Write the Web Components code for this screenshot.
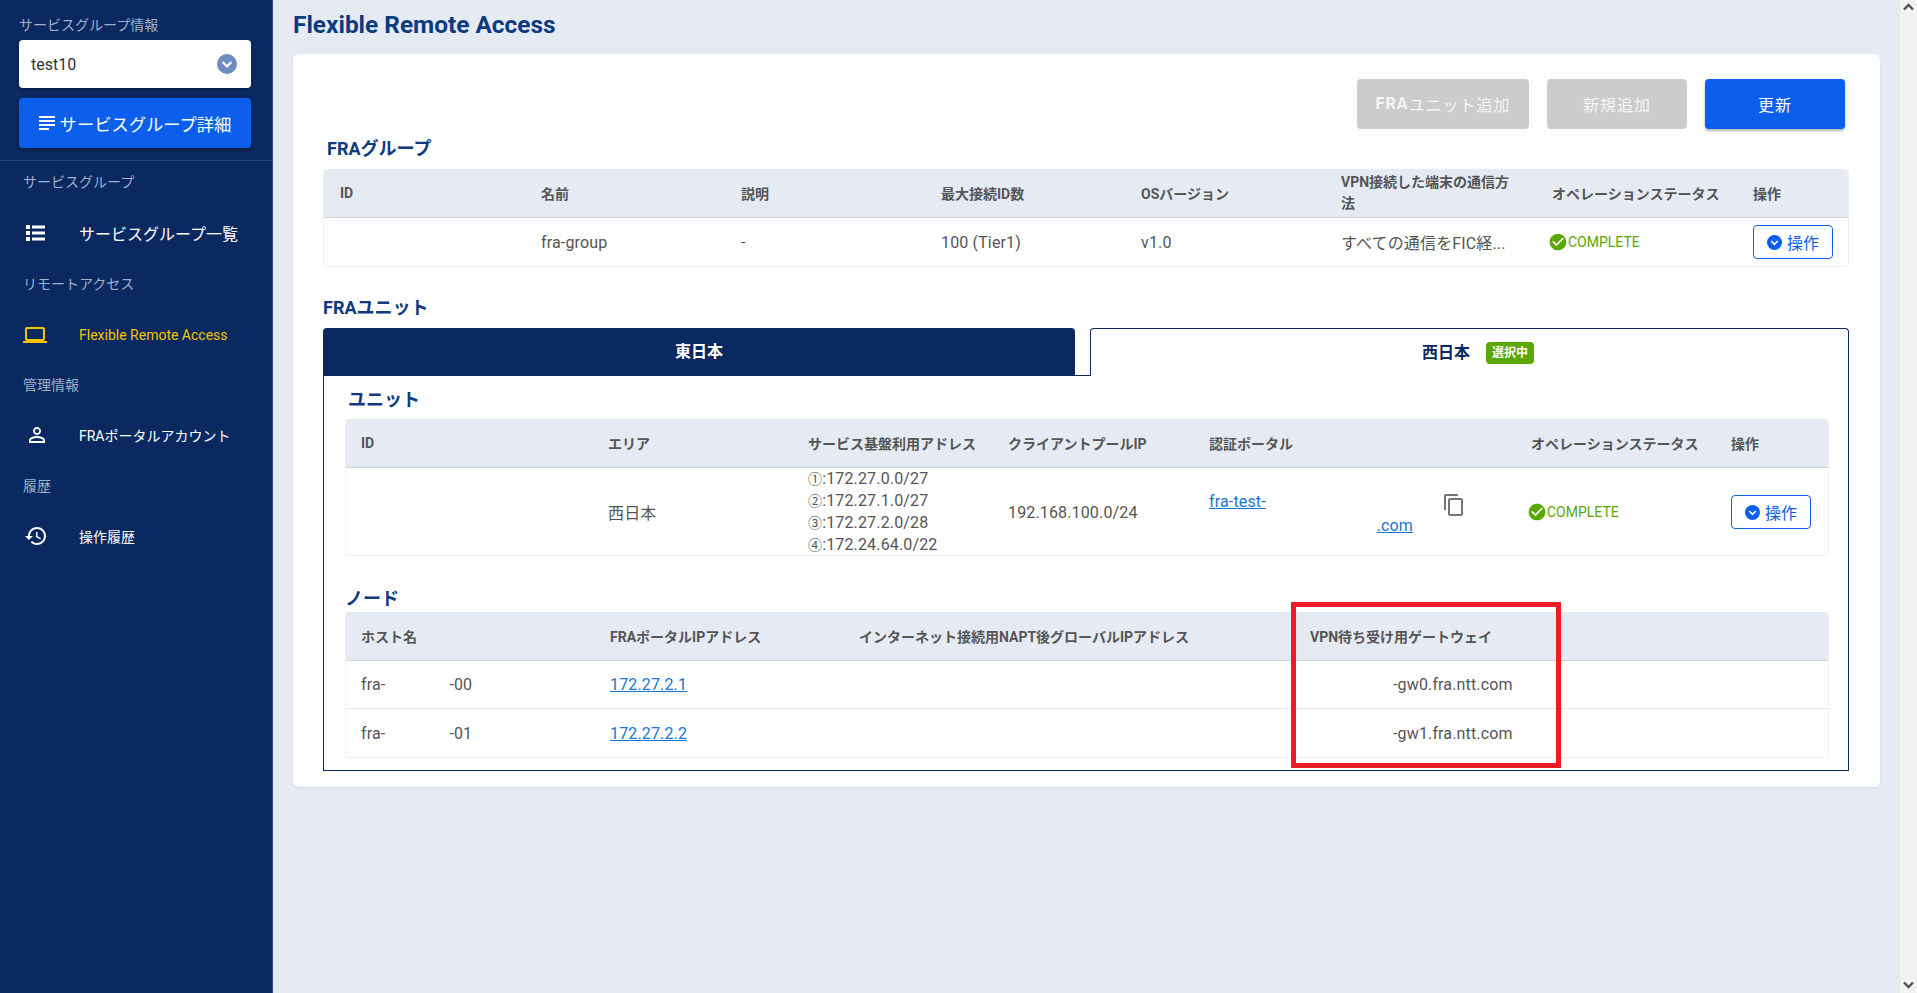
<!DOCTYPE html>
<html lang="ja">
<head>
<meta charset="utf-8">
<title>Flexible Remote Access</title>
<style>
  html, body { margin: 0; height: 993px; overflow: hidden; }
  body { font-family: Roboto, "Noto Sans CJK JP", sans-serif; font-size: 16px; color: #555; background: #e6eaf3; }
  a { color: #1976d2; }
  .ip { line-height: 22px; }
  .ip small { font-size: 14px; }
</style>
</head>
<body>
<fra-shell>
  <app-sidebar slot="side">
    <side-label>サービスグループ情報</side-label>
    <group-select>test10</group-select>
    <detail-button>サービスグループ詳細</detail-button>
  </app-sidebar>

  <h-title slot="title">Flexible Remote Access</h-title>

  <fra-card slot="main">
    <toolbar-row>
      <fra-button disabled style="width:172px"><b style="font-weight:700">FRA</b>ユニット追加</fra-button>
      <fra-button disabled>新規追加</fra-button>
      <fra-button>更新</fra-button>
    </toolbar-row>

    <section-title style="margin:8px 0 8px 4px">FRAグループ</section-title>
    <data-table style="--cols:201px 200px 200px 200px 200px 211px 201px 111px;--pad:16px">
      <table-row head style="height:48px">
        <div>ID</div><div>名前</div><div>説明</div><div>最大接続ID数</div><div>OSバージョン</div>
        <div style="line-height:21px">VPN接続した端末の通信方<br>法</div><div>オペレーションステータス</div><div>操作</div>
      </table-row>
      <table-row style="height:48px">
        <div></div><div>fra-group</div><div>-</div><div>100 (Tier1)</div><div>v1.0</div>
        <div>すべての通信をFIC経...</div>
        <div><status-badge>COMPLETE</status-badge></div><div><action-button>操作</action-button></div>
      </table-row>
    </data-table>

    <section-title style="margin:29px 0 8px">FRAユニット</section-title>
    <region-tabs>
      <span slot="east">東日本</span>
      <span slot="west">西日本</span>

      <section-title style="margin:0 0 7px 3px">ユニット</section-title>
      <data-table style="--cols:247px 200px 200px 201px 322px 200px 112px;--pad:15px">
        <table-row head style="height:48px">
          <div>ID</div><div>エリア</div><div>サービス基盤利用アドレス</div><div>クライアントプールIP</div><div>認証ポータル</div><div>オペレーションステータス</div><div>操作</div>
        </table-row>
        <table-row style="height:87px">
          <div></div><div>西日本</div>
          <div class="ip"><small>①</small>:172.27.0.0/27<br><small>②</small>:172.27.1.0/27<br><small>③</small>:172.27.2.0/28<br><small>④</small>:172.24.64.0/22</div>
          <div>192.168.100.0/24</div>
          <div><portal-link><a href="#">fra-test-</a><a slot="end" href="#">.com</a></portal-link></div>
          <div><status-badge>COMPLETE</status-badge></div><div><action-button>操作</action-button></div>
        </table-row>
      </data-table>

      <section-title style="margin:31px 0 1px">ノード</section-title>
      <data-table style="--cols:249px 249px 451px 533px;--pad:15px">
        <table-row head style="height:48px">
          <div>ホスト名</div><div>FRAポータルIPアドレス</div><div>インターネット接続用NAPT後グローバルIPアドレス</div><div>VPN待ち受け用ゲートウェイ</div>
        </table-row>
        <table-row style="height:47px">
          <div>fra-<span style="margin-left:64px">-00</span></div><div><a href="#">172.27.2.1</a></div><div></div><div style="padding-left:98px">-gw0.fra.ntt.com</div>
        </table-row>
        <table-row style="height:48px">
          <div>fra-<span style="margin-left:64px">-01</span></div><div><a href="#">172.27.2.2</a></div><div></div><div style="padding-left:98px">-gw1.fra.ntt.com</div>
        </table-row>
      </data-table>
      <mark-box slot="over"></mark-box>
    </region-tabs>
  </fra-card>
</fra-shell>

<script>
const chevronCircle = (size, bg) => `
  <svg width="${size}" height="${size}" viewBox="0 0 20 20"><circle cx="10" cy="10" r="10" fill="${bg}"/>
  <path d="M5.6 8l4.4 4.4L14.4 8" fill="none" stroke="#fff" stroke-width="2.2"/></svg>`;

// small helper, every element is just a shadow root with its own style + markup
function element(name, html) {
  class El extends HTMLElement {
    constructor() {
      super();
      this.attachShadow({ mode: 'open' }).innerHTML = html;
    }
  }
  customElements.define(name, El);
}

element('fra-shell', `
  <style>
    :host { display: flex; height: 993px; }
    aside { width: 272px; flex: none; border-right: 1px solid #2c4a7e; background: #092960; }
    main { flex: 1; min-width: 0; padding: 0 20px; }
    .title { height: 54px; }
    .bar { width: 17px; flex: none; background: #f1f1f1; display: flex; flex-direction: column; justify-content: space-between; align-items: center; padding: 3px 0 4px; box-sizing: border-box; }
  </style>
  <aside><slot name="side"></slot></aside>
  <main><div class="title"><slot name="title"></slot></div><slot name="main"></slot></main>
  <div class="bar">
    <svg width="11" height="8" viewBox="0 0 11 8"><path d="M1 6.5l4.5-4.5 4.5 4.5" fill="none" stroke="#505050" stroke-width="2.4"/></svg>
    <svg width="11" height="8" viewBox="0 0 11 8"><path d="M1 1.5l4.5 4.5 4.5-4.5" fill="none" stroke="#505050" stroke-width="2.4"/></svg>
  </div>
`);

element('app-sidebar', `
  <style>
    :host { display: block; color: #fff; }
    .top { padding: 15px 21px 12px 19px; border-bottom: 1px solid #2c4a7e; }
    ::slotted(side-label) { margin-bottom: 5px; }
    .label { display: block; font-size: 14px; line-height: 20px; color: #9fb0c8; padding-left: 23px; }
  </style>
  <div class="top"><slot></slot></div>
  <nav>
    <span class="label" style="padding-top:11px">サービスグループ</span>
    <nav-item style="font-size:16px;height:32px;margin:25px 0 25px">
      <svg slot="icon" width="19" height="16" viewBox="0 0 19 16" fill="#fff"><rect width="4" height="4"/><rect y="6" width="4" height="4"/><rect y="12" width="4" height="4"/><rect x="6" y=".5" width="13" height="3"/><rect x="6" y="6.5" width="13" height="3"/><rect x="6" y="12.5" width="13" height="3"/></svg>
      サービスグループ一覧
    </nav-item>
    <span class="label">リモートアクセス</span>
    <nav-item style="color:#f5c400;height:32px;margin:25px 0 24px">
      <svg slot="icon" width="24" height="24" viewBox="0 0 24 24" fill="#f5c400" style="margin-left:-3px"><path d="M20 18c1.1 0 2-.9 2-2V6c0-1.1-.9-2-2-2H4c-1.1 0-2 .9-2 2v10c0 1.1.9 2 2 2H0v2h24v-2h-4zM4 6h16v10H4V6z"/></svg>
      Flexible Remote Access
    </nav-item>
    <span class="label">管理情報</span>
    <nav-item style="height:32px;margin:24px 0 25px">
      <svg slot="icon" width="24" height="24" viewBox="0 0 24 24" fill="#fff" style="margin-left:-1px"><path d="M12 5.9c1.16 0 2.1.94 2.1 2.1s-.94 2.1-2.1 2.1S9.9 9.16 9.9 8s.94-2.1 2.1-2.1m0 9c2.97 0 6.1 1.46 6.1 2.1v1.1H5.9V17c0-.64 3.13-2.1 6.1-2.1M12 4C9.79 4 8 5.79 8 8s1.79 4 4 4 4-1.79 4-4-1.79-4-4-4zm0 9c-2.67 0-8 1.34-8 4v3h16v-3c0-2.66-5.33-4-8-4z"/></svg>
      FRAポータルアカウント
    </nav-item>
    <span class="label">履歴</span>
    <nav-item style="height:32px;margin:24px 0 0">
      <svg slot="icon" width="24" height="24" viewBox="0 0 24 24" fill="#fff" style="margin-left:-2px"><path d="M13 3c-4.97 0-9 4.03-9 9H1l3.89 3.89.07.14L9 12H6c0-3.87 3.13-7 7-7s7 3.13 7 7-3.13 7-7 7c-1.93 0-3.68-.79-4.94-2.06l-1.42 1.42C8.27 19.99 10.51 21 13 21c4.97 0 9-4.03 9-9s-4.03-9-9-9zm-1 5v5l4.28 2.54.72-1.21-3.5-2.08V8H12z"/></svg>
      操作履歴
    </nav-item>
  </nav>
`);

element('side-label', `
  <style>:host { display: block; font-size: 14px; line-height: 20px; color: #9fb0c8; }</style><slot></slot>
`);

element('nav-item', `
  <style>
    :host { display: flex; align-items: center; font-size: 14px; padding-left: 26px; color: #fff; }
    .icon { width: 53px; flex: none; display: flex; align-items: center; }
  </style>
  <span class="icon"><slot name="icon"></slot></span><slot></slot>
`);

element('group-select', `
  <style>
    :host { display: flex; align-items: center; justify-content: space-between; height: 48px; padding: 0 14px 0 12px; background: #fff; border-radius: 4px; color: #333; font-size: 16px; box-shadow: 0 1px 3px rgba(0,0,0,.3); }
    svg { display: block; }
  </style>
  <slot></slot>${chevronCircle(20, '#6f8cc0')}
`);

element('detail-button', `
  <style>
    :host { display: flex; align-items: center; justify-content: center; gap: 5px; height: 50px; margin-top: 10px; background: #0b5fec; border-radius: 4px; color: #fff; font-size: 17.3px; box-shadow: 0 2px 4px rgba(0,0,0,.3); }
  </style>
  <svg width="16" height="14" viewBox="0 0 16 14" fill="#fff"><rect width="16" height="2"/><rect y="4" width="16" height="2"/><rect y="8" width="16" height="2"/><rect y="12" width="10" height="2"/></svg>
  <slot></slot>
`);

element('h-title', `
  <style>:host { display: block; font-size: 24.4px; font-weight: 700; line-height: 50px; color: #0d3a80; }</style><slot></slot>
`);

element('fra-card', `
  <style>:host { display: block; box-sizing: border-box; height: 733px; padding: 25px 31px 0 30px; background: #fff; border-radius: 6px; box-shadow: 0 1px 2px rgba(10,30,80,.08); }</style><slot></slot>
`);

element('toolbar-row', `
  <style>:host { display: flex; justify-content: flex-end; gap: 18px; padding-right: 4px; }</style><slot></slot>
`);

element('fra-button', `
  <style>
    :host { display: flex; align-items: center; justify-content: center; box-sizing: border-box; width: 140px; height: 50px; padding-bottom: 1px; border-radius: 4px; background: #0b5fec; color: #fff; font-size: 16px; letter-spacing: 1px; box-shadow: 0 2px 3px rgba(0,0,0,.3); }
    :host([disabled]) { background: #ccc; color: #f5f5f5; box-shadow: none; }
  </style>
  <slot></slot>
`);

element('section-title', `
  <style>:host { display: block; font-size: 18px; font-weight: 700; line-height: 24px; color: #0d3a80; }</style><slot></slot>
`);

element('data-table', `
  <style>:host { display: block; border: 1px solid #edf0f5; border-top: 0; border-radius: 4px; background: #fff; overflow: hidden; }</style><slot></slot>
`);

element('table-row', `
  <style>
    :host { display: grid; grid-template-columns: var(--cols); align-items: center; border-bottom: 1px solid #e3e6ec; letter-spacing: .15px; }
    :host(:last-child) { border-bottom: 0; }
    :host([head]) { background: #e6eaf3; font-size: 14px; font-weight: 700; border-bottom: 1px solid #cdd2dc; letter-spacing: 0; }
    ::slotted(*) { padding-left: var(--pad); box-sizing: border-box; min-width: 0; }
  </style>
  <slot></slot>
`);

element('status-badge', `
  <style>
    :host { display: flex; align-items: center; font-size: 14px; color: #5aa700; margin-left: -4px; letter-spacing: 0; }
    svg { display: block; }
  </style>
  <svg width="20" height="20" viewBox="0 0 24 24" fill="#5aa700"><path d="M12 2C6.48 2 2 6.48 2 12s4.48 10 10 10 10-4.48 10-10S17.52 2 12 2zm-2 15l-5-5 1.41-1.41L10 14.17l7.59-7.59L19 8l-9 9z"/></svg>
  <slot></slot>
`);

element('action-button', `
  <style>
    :host { display: flex; align-items: center; justify-content: center; gap: 5px; box-sizing: border-box; width: 80px; height: 34px; border: 1px solid #0b5fec; border-radius: 4px; color: #0b5fec; font-size: 16px; background: #fff; letter-spacing: 0; }
    svg { display: block; }
  </style>
  ${chevronCircle(15, '#0b5fec')}<slot></slot>
`);

element('portal-link', `
  <style>
    :host { display: flex; align-items: flex-start; line-height: 24px; padding-top: 4px; }
    .lines { width: 204px; }
    .end { text-align: right; }
    svg { display: block; margin: 3px 0 0 29px; }
  </style>
  <div class="lines"><div><slot></slot></div><div class="end"><slot name="end"></slot></div></div>
  <svg width="24" height="24" viewBox="0 0 24 24" fill="#757575"><path d="M16 1H4c-1.1 0-2 .9-2 2v14h2V3h12V1zm3 4H8c-1.1 0-2 .9-2 2v14c0 1.1.9 2 2 2h11c1.1 0 2-.9 2-2V7c0-1.1-.9-2-2-2zm0 16H8V7h11v14z"/></svg>
`);

element('region-tabs', `
  <style>
    :host { display: block; position: relative; }
    .tabs { display: flex; height: 48px; font-weight: 700; font-size: 16px; line-height: 46px; }
    .east { width: 752px; background: #092960; color: #fff; border-radius: 4px 4px 0 0; display: flex; align-items: center; justify-content: center; }
    .gap { width: 15px; border-bottom: 1px solid #092960; }
    .west { flex: 1; box-sizing: border-box; border: 1px solid #092960; border-bottom: 0; border-radius: 4px 4px 0 0; color: #092960; display: flex; align-items: center; justify-content: center; gap: 16px; padding-left: 17px; }
    .badge { background: #5aa700; color: #fff; font-size: 12px; line-height: 22px; padding: 0 6px; border-radius: 4px; }
    .panel { border: 1px solid #092960; border-top: 0; padding: 12px 19px 12px 21px; }
  </style>
  <div class="tabs">
    <div class="east"><slot name="east"></slot></div>
    <div class="gap"></div>
    <div class="west"><slot name="west"></slot><span class="badge">選択中</span></div>
  </div>
  <div class="panel"><slot></slot></div>
  <slot name="over"></slot>
`);

// red annotation drawn on top of the node table
element('mark-box', `
  <style>:host { position: absolute; left: 968px; top: 274px; width: 270px; height: 166px; box-sizing: border-box; border: 5px solid #ed1c24; }</style>
`);
</script>
</body>
</html>
